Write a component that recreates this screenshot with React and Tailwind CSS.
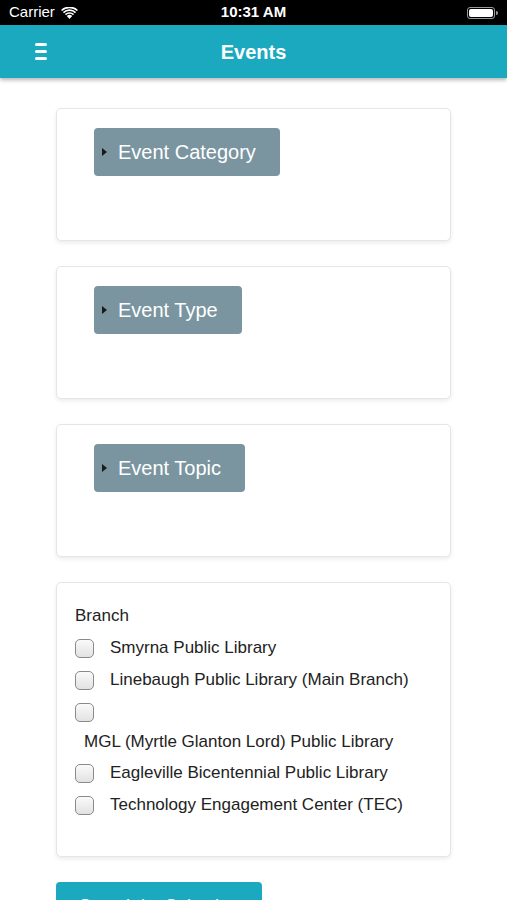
import { useState } from 'react';

const branches = [
	{ name: 'Smyrna Public Library' },
	{ name: 'Linebaugh Public Library (Main Branch)' },
	{ name: 'MGL (Myrtle Glanton Lord) Public Library', wrap: true },
	{ name: 'Eagleville Bicentennial Public Library' },
	{ name: 'Technology Engagement Center (TEC)' },
];

function Checkbox() {
	return (
		<span className="inline-block h-[19px] w-[19px] shrink-0 rounded-[5px] border border-[#8a8a8a] bg-gradient-to-b from-[#fafafa] to-[#e2e2e2]" />
	);
}

function FilterCard({ label }) {
	return (
		<div className="h-[133px] rounded-[5px] border border-[#e6e6e6] bg-white px-[37px] pt-[19px] shadow-[0_2px_4px_rgba(0,0,0,0.08)]">
			<button className="flex h-[48px] items-center gap-[11px] rounded-[4px] bg-[#7a959f] pl-[8px] pr-[24px] text-[20px] text-white">
				<span className="h-0 w-0 border-y-[4px] border-l-[5px] border-y-transparent border-l-[#1a1a1a]" />
				{label}
			</button>
		</div>
	);
}

export default function App() {
	const [checked] = useState({});

	return (
		<div
			className="min-h-screen bg-white text-[#222]"
			style={{ fontFamily: '"Liberation Sans", Arial, sans-serif' }}
		>
			<div className="flex h-[25px] items-center justify-between bg-black px-[9px] text-white">
				<div className="flex items-center gap-[6px] text-[15px]">
					Carrier
					<svg width="17" height="12" viewBox="0 0 17 12" fill="white">
						<path d="M8.5 12 L5.8 9.1 A4 4 0 0 1 11.2 9.1 Z" />
						<path d="M3.9 7.1 A6.6 6.6 0 0 1 13.1 7.1 L12 8.3 A5 5 0 0 0 5 8.3 Z" />
						<path d="M1.9 5 A9.5 9.5 0 0 1 15.1 5 L14 6.2 A8 8 0 0 0 3 6.2 Z" />
						<path d="M0 2.9 A12.4 12.4 0 0 1 17 2.9 L15.9 4.1 A11 11 0 0 0 1.1 4.1 Z" />
					</svg>
				</div>
				<div className="absolute left-1/2 -translate-x-1/2 text-[15px] font-bold">
					10:31 AM
				</div>
				<div className="flex items-center">
					<span className="flex h-[12px] w-[28px] items-center rounded-[3px] border border-[#9a9a9a] p-[1px]">
						<span className="h-full w-full rounded-[2px] bg-white" />
					</span>
					<span className="ml-[1px] h-[4px] w-[2px] rounded-r-sm bg-[#9a9a9a]" />
				</div>
			</div>

			<header className="relative flex h-[53px] items-center justify-center bg-[#1ba9bf] shadow-[0_2px_4px_rgba(0,0,0,0.3)]">
				<div className="absolute left-[35px] top-[18px] flex flex-col gap-[4px]">
					<span className="h-[3px] w-[12px] rounded-sm bg-white" />
					<span className="h-[3px] w-[12px] rounded-sm bg-white" />
					<span className="h-[3px] w-[12px] rounded-sm bg-white" />
				</div>
				<h1 className="text-[20px] font-bold text-white">Events</h1>
			</header>

			<main className="mx-[56px] flex flex-col gap-[25px] pt-[30px]">
				<FilterCard label="Event Category" />
				<FilterCard label="Event Type" />
				<FilterCard label="Event Topic" />

				<div className="h-[275px] rounded-[5px] border border-[#e6e6e6] bg-white pl-[18px] pt-[23px] shadow-[0_2px_4px_rgba(0,0,0,0.08)]">
					<p className="text-[17px] leading-[20px]">Branch</p>
					<div className="mt-[11px] flex flex-col gap-[10px]">
						{branches.map((b) =>
							b.wrap ? (
								<div key={b.name} className="flex flex-col gap-[9px]">
									<span className="flex h-[22px] items-center">
										<Checkbox />
									</span>
									<span className="pl-[9px] text-[17px] leading-[20px]">
										{b.name}
									</span>
								</div>
							) : (
								<label key={b.name} className="flex h-[22px] items-center gap-[16px]">
									<Checkbox />
									<span className="text-[17px] leading-[20px]">{b.name}</span>
								</label>
							)
						)}
					</div>
				</div>

				<div>
					<button className="h-[48px] w-[206px] rounded-[4px] bg-[#1ba9bf] text-[18px] text-white">
						Search by Selection
					</button>
				</div>
			</main>
		</div>
	);
}
